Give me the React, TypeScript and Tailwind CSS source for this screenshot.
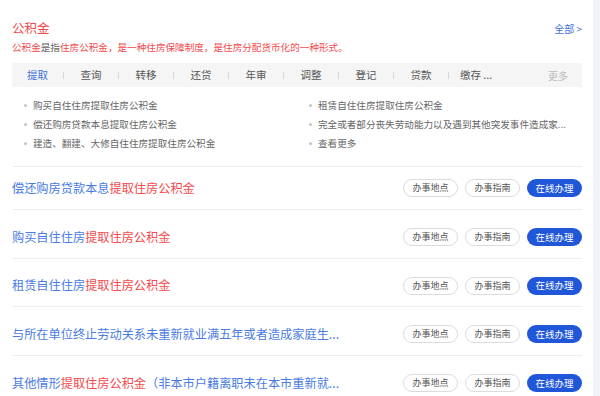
import React from "react";

const tabs = ["提取", "查询", "转移", "还贷", "年审", "调整", "登记", "贷款", "缴存 ..."];

const leftLinks = ["购买自住住房提取住房公积金", "偿还购房贷款本息提取住房公积金", "建造、翻建、大修自住住房提取住房公积金"];
const rightLinks = ["租赁自住住房提取住房公积金", "完全或者部分丧失劳动能力以及遇到其他突发事件造成家...", "查看更多"];

type Item = { pre: string; red?: string; post?: string };

const items: Item[] = [
  { pre: "偿还购房贷款本息", red: "提取住房公积金" },
  { pre: "购买自住住房", red: "提取住房公积金" },
  { pre: "租赁自住住房", red: "提取住房公积金" },
  { pre: "与所在单位终止劳动关系未重新就业满五年或者造成家庭生..." },
  { pre: "其他情形", red: "提取住房公积金", post: "（非本市户籍离职未在本市重新就..." },
];

function LinkItem({ text }: { text: string }) {
  return (
    <div className="flex h-[19px] items-center">
      <span className="mr-[6px] h-[3px] w-[3px] rounded-full bg-[#c4c4c4]" />
      <span className="text-[9.6px] text-[#666]">{text}</span>
    </div>
  );
}

function Row({ item, first }: { item: Item; first: boolean }) {
  return (
    <div
      className={
        first
          ? "flex h-[43px] items-center justify-between border-b border-[#eeeeee]"
          : "flex h-[48.7px] items-center justify-between border-b border-[#eeeeee] pt-[6px]"
      }
    >
      <div className="text-[12.2px] text-[#4a7be2]">
        {item.pre}
        {item.red && <span className="text-[#f5494c]">{item.red}</span>}
        {item.post}
      </div>
      <div className="flex gap-[7px]">
        <button className="flex h-[18px] w-[55px] items-center justify-center rounded-full border border-[#dcdcdc] bg-white text-[9px] text-[#555]">
          办事地点
        </button>
        <button className="flex h-[18px] w-[55px] items-center justify-center rounded-full border border-[#dcdcdc] bg-white text-[9px] text-[#555]">
          办事指南
        </button>
        <button className="flex h-[18px] w-[55px] items-center justify-center rounded-full bg-[#1f57d8] text-[9.5px] text-white">
          在线办理
        </button>
      </div>
    </div>
  );
}

export default function App() {
  return (
    <div
      className="flex h-[396px] w-[600px] overflow-hidden bg-white"
      style={{ fontFamily: '"Noto Sans CJK SC", "Noto Sans", sans-serif' }}
    >
      <div className="w-[593px] pl-[12px] pr-[11px] pt-[18px]">
        {/* header */}
        <div className="flex h-[20px] items-center justify-between">
          <span className="text-[12.5px] text-[#f5494c]">公积金</span>
          <span className="text-[10px] text-[#3f70dc]">全部 &gt;</span>
        </div>
        <div className="flex h-[18px] items-center text-[9.6px] text-[#f5494c]">
          公积金<span className="text-[#666]">是指</span>住房公积金，是一种住房保障制度，是住房分配货币化的一种形式。
        </div>

        {/* tabs */}
        <div className="mt-[7px] flex h-[24px] items-center bg-[#f5f5f5]">
          {tabs.map((t, i) => (
            <React.Fragment key={t}>
              <div
                className={
                  (i === 0 ? "w-[51px] text-[#3f70dc]" : "w-[54px] text-[#555]") +
                  " text-center text-[10.5px]"
                }
              >
                {t}
              </div>
              {i < tabs.length - 1 && <span className="h-[7px] w-px bg-[#d8d8d8]" />}
            </React.Fragment>
          ))}
          <div className="ml-auto pr-[14px] text-[10px] text-[#bbbbbb]">更多</div>
        </div>

        {/* quick links */}
        <div className="mt-[9px] grid grid-cols-[285px_1fr] pl-[12px]">
          <div>
            {leftLinks.map((l) => (
              <LinkItem key={l} text={l} />
            ))}
          </div>
          <div>
            {rightLinks.map((l) => (
              <LinkItem key={l} text={l} />
            ))}
          </div>
        </div>

        {/* list */}
        <div className="mt-[13px] border-t border-[#eeeeee]">
          {items.map((it, i) => (
            <Row key={i} item={it} first={i === 0} />
          ))}
        </div>
      </div>
      <div className="w-[7px] bg-[#f1f3f6]" />
    </div>
  );
}
